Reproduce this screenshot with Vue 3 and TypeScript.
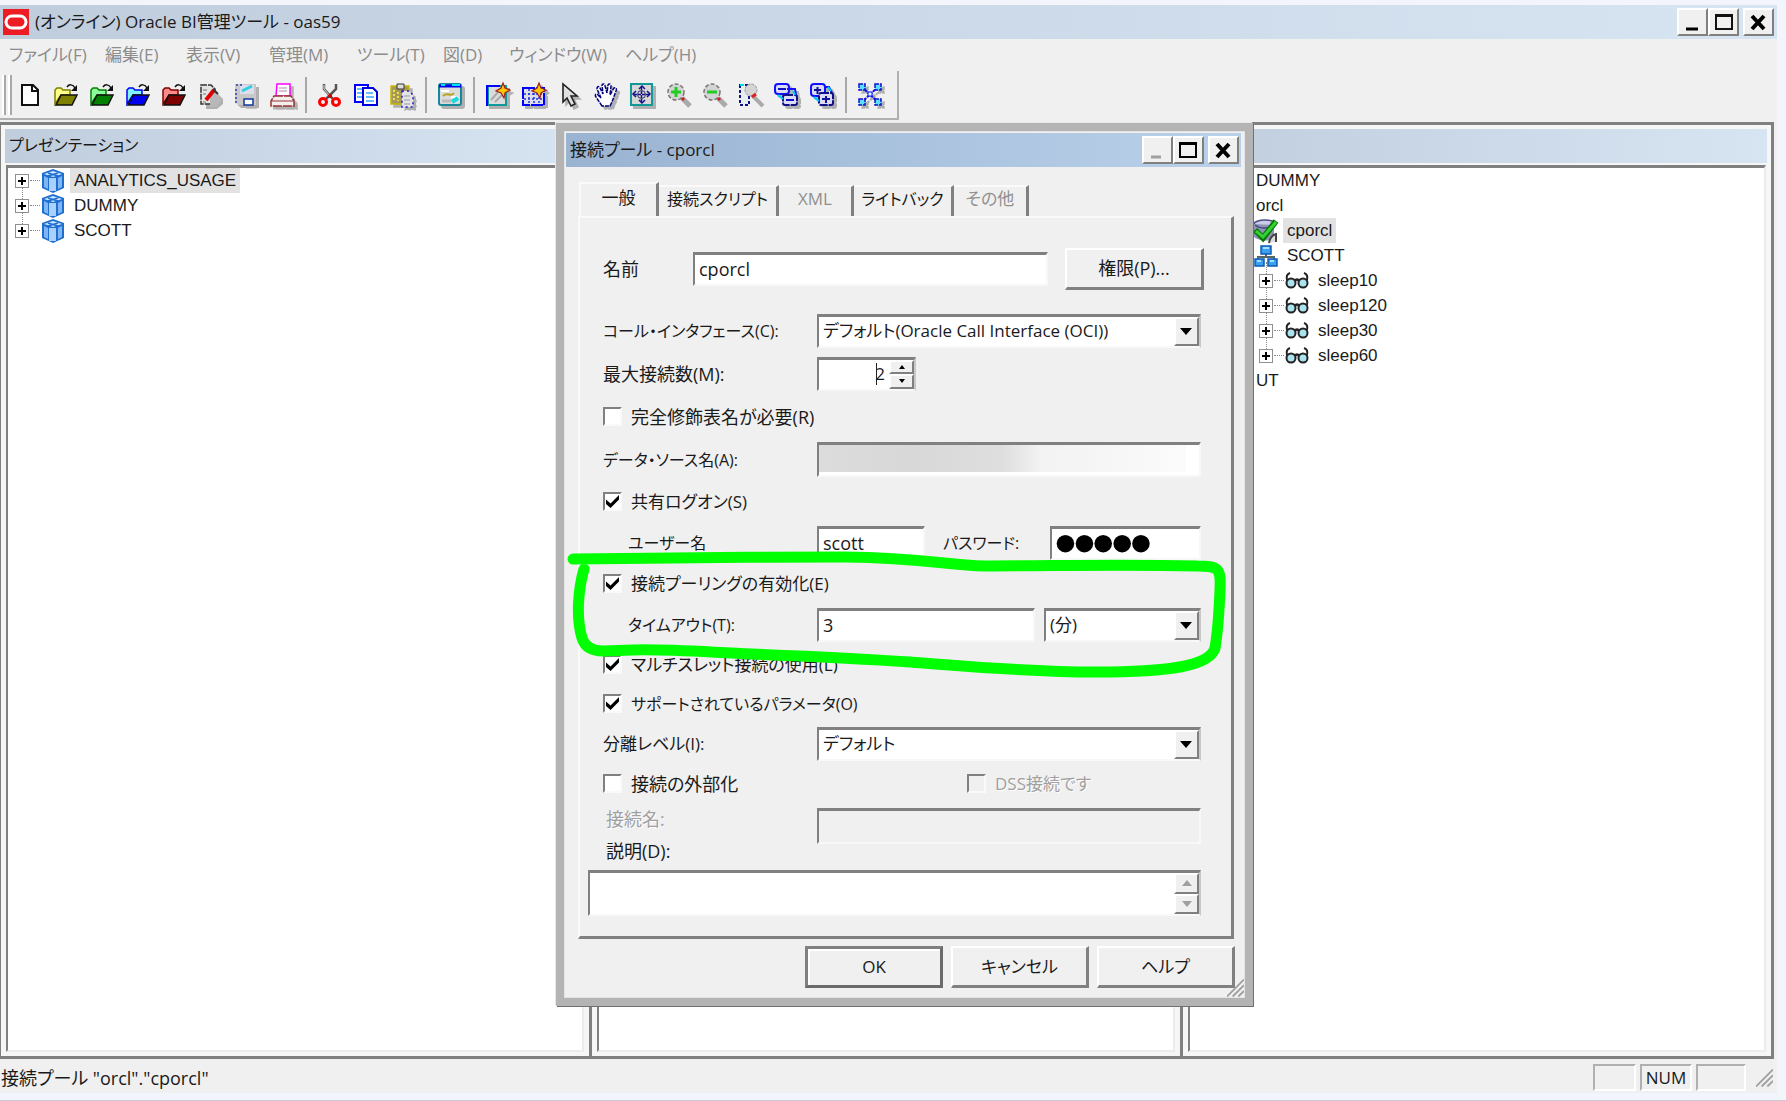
<script setup lang="ts">
import { ref } from 'vue'

interface TreeRow {
  label: string
  depth: number
  icon?: string
  expandable?: boolean
  selected?: boolean
}

const folder = (light: string, dark: string): string =>
  `<path d="M1 21V7l2-2h4l2 2h7v5H7z" fill="${light}" stroke="${dark}" stroke-width="1.5"/>
   <path d="M2 22 7 12h16l-5 10z" fill="${dark}" stroke="#111" stroke-width="1.5"/>
   <path d="M13 4c2-3 6-3 8 1" fill="none" stroke="#111" stroke-width="1.5"/><path d="M23 2v6h-6z" fill="#111"/>`

const lens = (mark: string): string =>
  `<path d="M16 15l8 8" stroke="#aaa" stroke-width="5"/><circle cx="10" cy="9" r="8" fill="#d4d4d4" stroke="#777" stroke-width="1.5" stroke-dasharray="4 2"/>
   <path d="M16 15l2 2" stroke="#c22" stroke-width="3"/><path d="${mark}" stroke="#2c2" stroke-width="3" fill="none"/>`

const icons: Record<string, string> = {
  blank: '<path d="M4 2h11l5 5v15H4z" fill="#fff" stroke="#111" stroke-width="2"/><path d="M14 2v6h6" fill="none" stroke="#111" stroke-width="2"/>',
  openYellow: folder('#ffff8a', '#7f7f00'),
  openGreen: folder('#8aff9a', '#007f00'),
  openBlue: folder('#7ff4ff', '#0000f0'),
  openRed: folder('#ff8a8a', '#7f0000'),
  check: '<path d="M8 8h9l8 8v5l-6 5H8z" fill="#b0b0b0"/><path d="M3 2h10l4 4v15H3z" fill="#e4e4e4" stroke="#333" stroke-width="1.5" stroke-dasharray="6 1"/><path d="M12 14l5-5 7 8-6 7h-6z" fill="#b8b8b8"/><path d="M8 17 16 7" stroke="#e00000" stroke-width="4"/><path d="M15 6l5 5" stroke="#333" stroke-width="2"/><path d="M5 7h4M5 11h3M5 19h3" stroke="#777"/>',
  save: '<path d="M1 1h21v21H4l-3-3z" fill="#c8c8c8"/><path d="M6 2h14v9H6z" fill="#dde"/><path d="M8 8l10-5" stroke="#35cde0" stroke-width="3"/><path d="M2 6v14M2 2h6" stroke="#24a" stroke-width="1.5" stroke-dasharray="2 2"/><path d="M10 16h9v6h-9z" fill="#fff" stroke="#113a9a" stroke-width="1.5"/>',
  print: '<path d="M7 1h13v12H6z" fill="#fff" stroke="#f0f" stroke-width="1.5"/><path d="M9 5h8M9 8h8" stroke="#a8a" /><path d="M4 13h17l3 5v5H1v-5z" fill="#f4eeee" stroke="#933" stroke-width="1.5" stroke-dasharray="9 1"/><path d="M2 18h21" stroke="#933"/>',
  cut: '<path d="M6 1v5l9 10M18 1v5L8 16" fill="none" stroke="#555" stroke-width="2.5"/><path d="M6 2v4l5 6" stroke="#ddd" fill="none"/><circle cx="5" cy="19" r="3.5" fill="#eee" stroke="#f00" stroke-width="3"/><circle cx="18" cy="19" r="3.5" fill="#eee" stroke="#f00" stroke-width="3"/><circle cx="12" cy="13" r="2" fill="#c00"/>',
  copy: '<path d="M1 2h13v17H1z" fill="#fff" stroke="#00f" stroke-width="2"/><path d="M9 5h10l4 4v13H9z" fill="#fff" stroke="#00d" stroke-width="2"/><path d="M3 6h5M3 10h5M3 14h5M12 10h7M12 14h8M12 18h8" stroke="#37a7ff" stroke-width="1.5"/>',
  paste: '<path d="M1 3h18v18H1z" fill="#a59a5c" stroke="#c8b800" stroke-width="1.5"/><path d="M7 1h7v5H7z" fill="#ddd" stroke="#333"/><path d="M4 7v11M8 9v9" stroke="#f0e040" stroke-width="2" stroke-dasharray="2 2"/><path d="M12 8h7l4 4v12H12z" fill="#e4e4e4" stroke="#22c" stroke-width="1.5" stroke-dasharray="2 3"/><path d="M14 13h6M14 17h6M14 21h6" stroke="#99a"/>',
  view: '<rect x="1" y="1" width="22" height="21" rx="2" fill="#dcdcdc" stroke="#17889c" stroke-width="2"/><path d="M1 3h22" stroke="#00e" stroke-width="3"/><path d="M3 2h4M14 2h8" stroke="#0df" stroke-width="2"/><path d="M3 8h8M13 14h7" stroke="#fff" stroke-width="2"/><path d="M5 13c5-5 7 2 11-3" fill="none" stroke="#b2a51a" stroke-width="2"/><path d="M4 18h9" stroke="#bbb" stroke-width="3"/><path d="M14 19l6-4" stroke="#1dd" stroke-width="4"/>',
  newBox: '<path d="M2 22V3h18v19z" fill="#dcdcdc" stroke="#199" stroke-width="2"/><path d="M1 23V3h13" fill="none" stroke="#00f" stroke-width="2"/><path d="M5 17l8-9M9 19l8-8" stroke="#aaa" stroke-width="2"/><path d="M17 0l2 5 5 2-5 3-1 5-3-5-5-2 5-3z" fill="#ffc800" stroke="#922" stroke-width="1.2"/>',
  newTable: '<path d="M1 5h21v17H1z" fill="#dde" stroke="#00f" stroke-width="2" stroke-dasharray="12 1"/><path d="M2 11h20M2 16h20M7 6v15M12 6v15M17 6v15" stroke="#23d" stroke-width="1.5" stroke-dasharray="2 2"/><path d="M17 0l2 5 5 2-5 3-1 5-3-5-5-2 5-3z" fill="#ffc800" stroke="#922" stroke-width="1.2"/>',
  pointer: '<path d="M5 1v18l4-4 4 8 4-2-4-8h6z" fill="#e0e0e0" stroke="#222" stroke-width="1.6"/>',
  hand: '<path d="M8 23 2 14c-2-3 1-4 3-1l2 2L3 6c0-3 2-3 3-1l3 6L8 2c1-2 3-1 3 1l2 7 1-8c1-2 3-1 3 1l-1 9 4-7c2-1 3 1 2 3l-4 11-2 4z" fill="#fff" stroke="#00007a" stroke-width="1.5" stroke-dasharray="4 1"/>',
  fit: '<path d="M1 1h21v21H1z" fill="#d8d8d8" stroke="#199" stroke-width="2"/><path d="M11.500 4v15M4 11.500h15" stroke="#118" stroke-width="1.500" stroke-dasharray="3 1"/><path d="M9 6l3-3 3 3M9 17l3 3 3-3M6 8l-3 3 3 3M17 8l3 3-3 3" stroke="#118" stroke-width="1.5" fill="none"/><circle cx="11.500" cy="11.500" r="4" fill="none" stroke="#336"/>',
  zoomIn: lens('M10 4v10M5 9h10'),
  zoomOut: lens('M5 9h10'),
  marquee: '<path d="M14 12l11 11" stroke="#aaa" stroke-width="4"/><path d="M2 2h9v20H2z" fill="#e6eef0" stroke="#118" stroke-width="2" stroke-dasharray="3 2"/><circle cx="13" cy="7" r="6" fill="#d4d4d4" stroke="#999" stroke-dasharray="3 1"/><path d="M14 14l4-3" stroke="#d22" stroke-width="3"/><path d="M2 2h4" stroke="#0de" stroke-width="2"/>',
  collapse: '<rect x="1" y="1" width="14" height="10" rx="3" fill="#dcdcf4" stroke="#11f" stroke-width="2"/><path d="M13 6h8l1 6" fill="none" stroke="#11f" stroke-width="2"/><rect x="9" y="12" width="14" height="10" rx="2" fill="#dcdcf4" stroke="#118" stroke-width="2" stroke-dasharray="8 1"/><path d="M4 6h8M12 17h8" stroke="#11c" stroke-width="2"/><path d="M4 12l5 4M19 8l2 4" stroke="#0cf" stroke-width="2"/>',
  expand: '<rect x="1" y="1" width="14" height="12" rx="3" fill="#dcdcf4" stroke="#11f" stroke-width="2"/><path d="M15 4h4l3 6" fill="none" stroke="#11f" stroke-width="2"/><rect x="9" y="10" width="14" height="12" rx="2" fill="#dcdcf4" stroke="#118" stroke-width="2" stroke-dasharray="8 1"/><path d="M4 7h7M7.500 4v7M12 16h8M16 13v7" stroke="#119" stroke-width="2"/><path d="M4 14l5 4M18 4l3 4" stroke="#0cf" stroke-width="2"/>',
  network: '<path d="M4 4l16 15M20 4 4 19" stroke="#11e" stroke-width="2" stroke-dasharray="3 1"/><g fill="#5ae0ff" stroke="#11c" stroke-width="1.5" stroke-dasharray="4 1"><rect x="1" y="1" width="6" height="6"/><rect x="17" y="1" width="6" height="6"/><rect x="1" y="16" width="6" height="6"/><rect x="17" y="16" width="6" height="6"/></g><rect x="10" y="9" width="4" height="4" fill="#dff" stroke="#11e"/>',
  cube: '<path d="M12 0 23 4v15l-11 5L1 19V4z" fill="#1f6fd0"/><path d="M12 2 21 5l-9 3-9-3z" fill="#cfe6ff"/><path d="M3 7l4 2v11l-4-2zM21 7l-4 2v11l4-2z" fill="#7fb6f5"/><path d="M8 9h7v13H8z" fill="#a9d0ff"/><path d="M7 4l10 3M17 4 7 7" stroke="#1f6fd0" stroke-width="1.5"/>',
  pool: '<ellipse cx="11" cy="5" rx="11" ry="4" fill="#c9cbe8" stroke="#4b4e80" stroke-width="1.5"/><path d="M0 5v13c4 4 16 5 20 1V6" fill="#8f93b8"/><path d="M1 6c5 4 15 4 20 0" fill="none" stroke="#444873" stroke-width="1.5"/><path d="M15 24c1-6 3-8 7-9v8" fill="#ddd" stroke="#444" stroke-width="2"/><path d="M1 11l8 8L22 2" fill="none" stroke="#087a08" stroke-width="6"/><path d="M2 12l7 6L22 3" fill="none" stroke="#35d035" stroke-width="3"/>',
  schema: '<path d="M12 8v6M4 17v-4h16v4" fill="none" stroke="#566" stroke-width="2"/><g fill="#3ba0f0" stroke="#0d5cb4" stroke-width="1.500"><path d="M7 2h10v8H7zM1 15h9v7H1zM14 15h9v7h-9z"/></g><path d="M9 4h6M3 17h4M16 17h4" stroke="#a8dcff" stroke-width="2"/>',
  glasses: '<path d="M2 11C1 7 2 5 5 4M22 11c1-4 0-6-3-7" fill="none" stroke="#222" stroke-width="2"/><circle cx="6" cy="14" r="4.500" fill="#a9e4ee" stroke="#222" stroke-width="2"/><circle cx="18" cy="14" r="4.500" fill="#a9e4ee" stroke="#222" stroke-width="2"/><path d="M10 12c1-2 3-2 4 0" fill="none" stroke="#222" stroke-width="2.500"/>'
}

const menus = ['ファイル(F)', '編集(E)', '表示(V)', '管理(M)', 'ツール(T)', '図(D)', 'ウィンドウ(W)', 'ヘルプ(H)']

const toolGroups = [
  ['blank', 'openYellow', 'openGreen', 'openBlue', 'openRed', 'check', 'save', 'print'],
  ['cut', 'copy', 'paste'],
  ['view'],
  ['newBox', 'newTable', 'pointer', 'hand', 'fit', 'zoomIn', 'zoomOut', 'marquee', 'collapse', 'expand'],
  ['network']
]
const shadowed = new Set(['save', 'print', 'paste', 'view', 'newBox', 'newTable', 'pointer', 'hand', 'fit', 'collapse', 'expand', 'network'])

const panes: { title: string; kind: string; rows: TreeRow[] }[] = [
  {
    title: 'プレゼンテーション',
    kind: 'presentation',
    rows: [
      { label: 'ANALYTICS_USAGE', depth: 0, icon: 'cube', expandable: true, selected: true },
      { label: 'DUMMY', depth: 0, icon: 'cube', expandable: true },
      { label: 'SCOTT', depth: 0, icon: 'cube', expandable: true }
    ]
  },
  { title: '', kind: 'business', rows: [] },
  {
    title: '',
    kind: 'physical',
    rows: [
      { label: 'DUMMY', depth: 0 },
      { label: 'orcl', depth: 0 },
      { label: 'cporcl', depth: 1, icon: 'pool', selected: true },
      { label: 'SCOTT', depth: 1, icon: 'schema' },
      { label: 'sleep10', depth: 2, icon: 'glasses', expandable: true },
      { label: 'sleep120', depth: 2, icon: 'glasses', expandable: true },
      { label: 'sleep30', depth: 2, icon: 'glasses', expandable: true },
      { label: 'sleep60', depth: 2, icon: 'glasses', expandable: true },
      { label: 'UT', depth: 0 }
    ]
  }
]

const tabs = [
  { label: '一般', disabled: false },
  { label: '接続スクリプト', disabled: false },
  { label: 'XML', disabled: true },
  { label: 'ライトバック', disabled: false },
  { label: 'その他', disabled: true }
]

const name = ref('cporcl')
const maxConnections = ref('2')
const user = ref('scott')
const password = ref('scott')
const timeout = ref('3')
const qualified = ref(false)
const shared = ref(true)
const pooling = ref(true)
const multithread = ref(true)
const parameters = ref(true)
const externalize = ref(false)
</script>

<template>
  <div class="app">
    <header class="titlebar">
      <svg class="logo" viewBox="0 0 26 26"><rect width="26" height="26" fill="#ed1c24" /><rect x="3" y="7" width="20" height="12" rx="6" fill="none" stroke="#fff" stroke-width="3" /></svg>
      <h1>(オンライン) Oracle BI管理ツール - oas59</h1>
      <div class="winbtns">
        <button aria-label="minimize"><svg viewBox="0 0 24 24"><path d="M5 19h12" stroke="#000" stroke-width="3" /></svg></button>
        <button aria-label="maximize"><svg viewBox="0 0 24 24"><path d="M4 5h16v14H4zM4 6h16" fill="none" stroke="#111" stroke-width="2" /></svg></button>
        <button aria-label="close" class="close"><svg viewBox="0 0 24 24"><path d="M5 6l12 13M17 6 5 19" stroke="#000" stroke-width="4" /></svg></button>
      </div>
    </header>

    <nav class="menubar">
      <button v-for="m in menus" :key="m" disabled>{{ m }}</button>
    </nav>

    <div class="toolbar-area">
      <div class="toolbar">
        <i class="grip"></i><i class="grip"></i>
        <div v-for="(group, g) in toolGroups" :key="g" class="group">
          <button v-for="icon in group" :key="icon" :aria-label="icon" :class="{ shadowed: shadowed.has(icon) }">
            <svg viewBox="0 0 24 24" v-html="icons[icon]"></svg>
          </button>
        </div>
      </div>
    </div>

    <main class="panes">
      <section v-for="pane in panes" :key="pane.kind" class="pane" :class="pane.kind">
        <h2>{{ pane.title }}</h2>
        <ul class="tree">
          <li v-for="row in pane.rows" :key="row.label" :class="'depth' + row.depth">
            <template v-if="row.expandable">
              <button class="expander" aria-label="expand"></button><i class="dots"></i>
            </template>
            <svg v-if="row.icon" class="node" viewBox="0 0 24 24" v-html="icons[row.icon]"></svg>
            <span :class="{ selected: row.selected }">{{ row.label }}</span>
          </li>
        </ul>
      </section>
    </main>

    <footer class="statusbar">
      <span class="message">接続プール "orcl"."cporcl"</span>
      <span class="cell"></span><span class="cell num">NUM</span><span class="cell last"></span>
      <svg class="sizer" viewBox="0 0 18 18"><path d="M0 18 18 0M6 18 18 6M12 18l6-6" stroke="#a0a0a0" stroke-width="2" /></svg>
    </footer>

    <div class="dialog" role="dialog" aria-labelledby="dlg-title">
      <div class="dialog-title">
        <h2 id="dlg-title">接続プール - cporcl</h2>
        <div class="winbtns">
          <button aria-label="minimize dialog" disabled><svg viewBox="0 0 24 24"><path d="M5 19h10" stroke="#a0a0a0" stroke-width="3" /></svg></button>
          <button aria-label="maximize dialog"><svg viewBox="0 0 24 24"><path d="M3 5h16v14H3zM3 6h16" fill="none" stroke="#000" stroke-width="2" /></svg></button>
          <button aria-label="close dialog" class="close"><svg viewBox="0 0 24 24"><path d="M5 6l12 13M17 6 5 19" stroke="#000" stroke-width="4" /></svg></button>
        </div>
      </div>

      <div class="tabs" role="tablist">
        <button v-for="(tab, i) in tabs" :key="tab.label" role="tab" :class="{ active: i === 0 }" :disabled="tab.disabled">{{ tab.label }}</button>
      </div>

      <form class="page" @submit.prevent>
        <div class="row first">
          <label for="name" class="short">名前</label>
          <input id="name" v-model="name" class="field grow" type="text" />
          <button class="push perm" type="button">権限(P)...</button>
        </div>
        <div class="row">
          <label for="call" class="kana">コール・インタフェース(C):</label>
          <div class="combo grow"><select id="call"><option>デフォルト(Oracle Call Interface (OCI))</option></select><i></i></div>
        </div>
        <div class="row">
          <label for="max">最大接続数(M):</label>
          <div class="spin">
            <input id="max" v-model="maxConnections" type="text" />
            <div><button type="button" aria-label="up"></button><button type="button" aria-label="down" class="down"></button></div>
          </div>
        </div>
        <div class="row"><label class="check"><input v-model="qualified" type="checkbox" />完全修飾表名が必要(R)</label></div>
        <div class="row">
          <label for="source" class="kana">データ・ソース名(A):</label>
          <div class="masked grow"><input id="source" class="field" type="text" /><i></i></div>
        </div>
        <div class="row mid"><label class="check mixed"><input v-model="shared" type="checkbox" />共有ログオン(S)</label></div>
        <div class="row mid">
          <label for="user" class="sub kana">ユーザー名</label>
          <input id="user" v-model="user" class="field user" type="text" />
          <label for="pwd" class="pwd-label kana">パスワード:</label>
          <input id="pwd" v-model="password" class="field pwd" type="password" />
        </div>
        <div class="row mid"><label class="check mixed"><input v-model="pooling" type="checkbox" />接続プーリングの有効化(E)</label></div>
        <div class="row mid">
          <label for="timeout" class="sub kana">タイムアウト(T):</label>
          <input id="timeout" v-model="timeout" class="field grow" type="text" />
          <div class="combo unit"><select aria-label="タイムアウト単位"><option>(分)</option></select><i></i></div>
        </div>
        <div class="row low"><label class="check mixed"><input v-model="multithread" type="checkbox" />マルチスレット接続の使用(L)</label></div>
        <div class="row low"><label class="check kana"><input v-model="parameters" type="checkbox" />サポートされているパラメータ(O)</label></div>
        <div class="row mid">
          <label for="isolation" class="mixed">分離レベル(I):</label>
          <div class="combo grow"><select id="isolation"><option>デフォルト</option></select><i></i></div>
        </div>
        <div class="row low">
          <label class="check grow"><input v-model="externalize" type="checkbox" />接続の外部化</label>
          <label class="check mixed dss"><input type="checkbox" disabled />DSS接続です</label>
        </div>
        <div class="naming">
          <label for="conn" class="off">接続名:</label>
          <input id="conn" class="field" type="text" disabled />
          <label for="desc">説明(D):</label>
        </div>
        <div class="desc">
          <textarea id="desc"></textarea>
          <div class="scroll"><button type="button" disabled aria-label="scroll up"></button><button type="button" disabled aria-label="scroll down" class="down"></button></div>
        </div>
      </form>

      <div class="actions">
        <button class="push default">OK</button>
        <button class="push">キャンセル</button>
        <button class="push">ヘルプ</button>
      </div>
      <svg class="sizer" viewBox="0 0 18 18"><path d="M0 18 18 0M6 18 18 6M12 18l6-6" stroke="#a0a0a0" stroke-width="2" /></svg>

      <svg class="marker" viewBox="0 0 670 140">
        <path d="M18 19C80 18 200 17 290 17C370 18 390 25 430 26C500 26 560 24 642 26C664 26 666 28 665 50C664 75 663 90 660 108C655 126 615 132 541 132C470 132 410 126 355 122C300 118 250 116 197 114C150 112 110 109 78 110L48 111C38 111 30 108 27 98C21 78 23 50 29 29" />
      </svg>
    </div>
  </div>
</template>

<style>
body {
  margin: 0;
  background: #f2f5fb;
}
</style>

<style scoped>
.app {
  position: relative;
  box-sizing: border-box;
  height: 100vh;
  min-height: 1040px;
  padding: 5px 9px 7px 0;
  border-bottom: 1px solid #c8c8ce;
  background: #f2f5fb;
  display: flex;
  flex-direction: column;
  font: 18px/24px "Open Sans", "Noto Sans CJK JP", sans-serif;
  font-feature-settings: "palt";
  color: #1a1a1a;
  overflow: hidden;
}
button, input, select, textarea {
  box-sizing: border-box;
  margin: 0;
  padding: 0;
  font: inherit;
  font-feature-settings: inherit;
  color: inherit;
  border: 0;
  border-radius: 0;
  outline: 0;
}
h1, h2 { margin: 0; font: inherit; }
.kana { font-size: 16px; }
.mixed { font-size: 17px; }
.grow { flex: 1; min-width: 0; }

.titlebar {
  display: flex;
  align-items: center;
  gap: 6px;
  height: 34px;
  padding: 0 3px;
  background: linear-gradient(90deg, #c0cddd, #d7e4f2);
}
.titlebar h1 { flex: 1; font-size: 17px; }
.logo { width: 26px; height: 26px; }
.winbtns { display: flex; }
.winbtns button {
  width: 31px;
  height: 28px;
  background: #f0f0f0;
  border: 2px solid;
  border-color: #fff #808080 #808080 #fff;
  display: grid;
  place-items: center;
}
.winbtns .close { margin-left: 4px; }
.winbtns svg { width: 24px; height: 24px; }

.menubar {
  display: grid;
  grid-template-columns: 96px 81px 83px 88px 86px 66px 116px 90px;
  height: 32px;
  padding-left: 9px;
  background: #f0f0f0;
}
.menubar button {
  background: none;
  color: #8c8c8c;
  text-align: left;
  font-size: 17px;
  white-space: nowrap;
}

.toolbar-area {
  display: flex;
  padding-bottom: 2px;
  background: #f0f0f0;
}
.toolbar {
  display: flex;
  align-items: center;
  box-sizing: border-box;
  height: 49px;
  padding-right: 9px;
  border-right: 2px solid #b0b0b0;
  border-bottom: 2px solid #b0b0b0;
}
.grip {
  width: 2px;
  height: 40px;
  margin-left: 2px;
  border-right: 2px solid #a8a8a8;
  background: #fff;
}
.group { display: flex; align-items: center; }
.group + .group::before {
  content: "";
  width: 2px;
  height: 36px;
  margin: 0 5px;
  background: #a8a8a8;
}
.group button {
  width: 36px;
  height: 36px;
  background: none;
  display: grid;
  place-items: center;
}
.group svg { width: 24px; height: 24px; overflow: visible; }
.group .shadowed svg { filter: drop-shadow(3px 3px 0 #b0b0b0); }

.panes {
  flex: 1;
  display: flex;
  padding-right: 3px;
  background: #f0f0f0;
}
.pane {
  flex: 1;
  display: flex;
  flex-direction: column;
  box-sizing: border-box;
  padding: 4px;
  background: #f6f6f6;
  border: solid #808080;
  border-width: 3px 2px 3px 1px;
}
.pane.physical { border-right-width: 3px; }
.pane h2 {
  height: 34px;
  padding-left: 4px;
  line-height: 32px;
  font-size: 16px;
  background: linear-gradient(90deg, #c0cddd, #d7e4f2);
}
.tree {
  flex: 1;
  margin: 2px 1px 0;
  padding: 0;
  list-style: none;
  background: #fff;
  border: solid;
  border-width: 3px 2px 2px;
  border-color: #808080 #ececec #ececec #808080;
  font: 17px/25px "Liberation Sans", sans-serif;
}
.tree li { display: flex; align-items: center; height: 25px; position: relative; }
.presentation .depth0 { padding-left: 7px; }
.physical .depth0 { padding-left: 62px; }
.physical .depth1 { padding-left: 64px; }
.physical .depth2 { padding-left: 69px; }
.tree span { padding: 0 4px; }
.tree .selected { background: #e2e2e2; }
.node { width: 24px; height: 24px; margin-right: 5px; overflow: visible; }
.expander {
  width: 14px;
  height: 14px;
  border: 1px solid #909090;
  background:
    linear-gradient(#000, #000) center / 8px 2px no-repeat,
    linear-gradient(#000, #000) center / 2px 8px no-repeat,
    #fff;
}
.dots { width: 10px; margin: 0 1px; border-top: 1px dotted #888; }
.depth2 .expander::before,
.presentation li + li .expander::before {
  content: "";
  position: absolute;
  top: -6px;
  height: 12px;
  border-left: 1px dotted #888;
}

.statusbar {
  display: flex;
  align-items: center;
  height: 34px;
  padding: 3px 4px 0 1px;
  box-sizing: border-box;
  background: #f0f0f0;
  font-size: 17px;
}
.message { flex: 1; font-size: 18px; }
.cell {
  box-sizing: border-box;
  width: 43px;
  height: 27px;
  margin-right: 4px;
  border: 2px solid;
  border-color: #b0b0b0 #fff #fff #b0b0b0;
  text-align: center;
  line-height: 24px;
}
.num { width: 52px; }
.last { width: 50px; margin-right: 10px; }
.sizer { width: 17px; height: 18px; }

.dialog {
  position: absolute;
  left: 556px;
  top: 123px;
  box-sizing: border-box;
  width: 697px;
  padding: 2px;
  background: #f0f0f0;
  border: 8px solid #b4b4b4;
  box-shadow: inset 0 0 0 1px #e4e4e4, 1px 1px 0 #707070, -1px -1px 0 #e8e8e8;
}
.dialog-title {
  display: flex;
  align-items: center;
  height: 34px;
  margin-right: 2px;
  padding: 0 2px 0 4px;
  background: linear-gradient(90deg, #9ab3d1, #b9d1ea);
}
.dialog-title h2 { flex: 1; font-size: 17px; }
.tabs {
  display: flex;
  align-items: flex-end;
  height: 34px;
  padding: 15px 0 0 13px;
}
.tabs button {
  height: 31px;
  padding-bottom: 9px;
  background: #f0f0f0;
  border: solid;
  border-width: 2px 3px 0 0;
  border-color: #fafafa #808080 #fafafa #fafafa;
  font-size: 17px;
  white-space: nowrap;
}
.tabs button:nth-child(1) { width: 80px; }
.tabs button:nth-child(2) { width: 120px; font-size: 16px; }
.tabs button:nth-child(3) { width: 75px; }
.tabs button:nth-child(4) { width: 100px; font-size: 16px; }
.tabs button:nth-child(5) { width: 75px; }
.tabs .active { height: 34px; padding-bottom: 4px; border-left-width: 2px; }
.tabs button:disabled { color: #909090; }

.page {
  margin: 0 9px 0 12px;
  padding: 29px 30px 20px 23px;
  border: 2px solid;
  border-color: #fafafa #808080 #808080 #fafafa;
  border-right-width: 3px;
  border-bottom-width: 3px;
}
.row { display: flex; align-items: center; height: 43px; }
.row.mid { height: 41px; }
.row.low { height: 39px; }
.first { margin-bottom: 19px; }
.row > label:not(.check) { width: 214px; white-space: nowrap; }
.row > label.short { width: 90px; }
.row > label.sub { width: 189px; padding-left: 25px; }
.row > label.pwd-label { width: 107px; padding-left: 18px; }
.field {
  height: 34px;
  padding: 0 4px;
  background: #fff;
  border: solid;
  border-width: 3px 2px 2px;
  border-color: #808080 #f8f8f8 #f8f8f8 #808080;
}
.user { width: 108px; }
.pwd {
  flex: 1;
  min-width: 0;
  font: 54px/28px "Liberation Sans", sans-serif;
  color: #000;
  -webkit-text-stroke: 3px #000;
}
.push {
  height: 42px;
  background: #f0f0f0;
  border: solid;
  border-width: 2px 3px 3px 2px;
  border-color: #fff #808080 #808080 #fff;
  font-size: 17px;
}
.perm { width: 139px; margin: 0 -3px 0 17px; font-size: 18px; }

.combo, .spin {
  display: flex;
  position: relative;
  box-sizing: border-box;
  height: 34px;
  background: #fff;
  border: solid;
  border-width: 3px 2px 2px;
  border-color: #808080 #c8c8c8 #f8f8f8 #808080;
}
.combo select {
  flex: 1;
  min-width: 0;
  appearance: none;
  padding-left: 4px;
  background: #fff;
  font-size: 17px;
}
.combo i {
  position: absolute;
  right: 0;
  top: 0;
  bottom: 0;
  width: 25px;
  box-sizing: border-box;
  background: #f0f0f0;
  border: 2px solid;
  border-color: #fff #808080 #808080 #fff;
  pointer-events: none;
}
.combo i::before {
  content: "";
  position: absolute;
  left: 4px;
  top: 9px;
  border: 6px solid transparent;
  border-top: 7px solid #000;
  border-bottom: 0;
}
.unit { width: 157px; margin-left: 9px; }
.spin { width: 99px; }
.spin::before {
  content: "";
  position: absolute;
  left: 57px;
  top: 3px;
  width: 1px;
  height: 22px;
  background: #222;
}
.spin input { flex: 1; min-width: 0; padding-right: 4px; background: none; text-align: right; font-size: 17px; }
.spin > div, .scroll { display: flex; flex-direction: column; width: 25px; }
.spin button, .scroll button {
  flex: 1;
  background: #f0f0f0;
  border: 2px solid;
  border-color: #fff #808080 #808080 #fff;
  display: grid;
  place-items: center;
}
.spin button::before, .scroll button::before {
  content: "";
  border: 3px solid transparent;
  border-bottom: 4px solid #000;
  border-top: 0;
}
.spin .down::before, .scroll .down::before { transform: rotate(180deg); }
.scroll button::before { border-width: 0 5px 6px; border-bottom-color: #a0a0a0; }

.masked { display: flex; position: relative; }
.masked .field { width: 100%; height: 35px; }
.masked i {
  position: absolute;
  inset: 3px 15px 5px 2px;
  background: linear-gradient(90deg, #dcdcdc, #d8d8d8 25%, #dedede 50%, #f2f2f2 60%, #fbfbfb);
}

.check { display: flex; align-items: center; gap: 9px; white-space: nowrap; }
.check input {
  appearance: none;
  width: 19px;
  height: 19px;
  background: #fff;
  border: 2px solid;
  border-color: #808080 #fafafa #fafafa #808080;
}
.check input:checked::before {
  content: "";
  display: block;
  width: 13px;
  height: 13px;
  margin: 1px;
  background: #000;
  clip-path: polygon(0 35%, 35% 65%, 100% 0, 100% 35%, 35% 100%, 0 70%);
}
.check input:disabled { background: #f0f0f0; }
.dss { width: 234px; color: #a0a0a0; text-shadow: 1px 1px 0 #fff; }
.off { color: #a0a0a0; text-shadow: 1px 1px 0 #fff; }
.naming {
  display: grid;
  grid-template-columns: 211px 1fr;
  grid-template-rows: 32px 32px;
  align-items: center;
  padding-left: 3px;
}
.naming .field { grid-row: span 2; align-self: start; height: 36px; margin-top: 5px; background: #f0f0f0; }
.desc {
  display: flex;
  box-sizing: border-box;
  height: 46px;
  margin: 3px 0 0 -15px;
  background: #fff;
  border: solid;
  border-width: 3px 2px 2px;
  border-color: #808080 #c8c8c8 #f8f8f8 #808080;
}
.desc textarea { flex: 1; resize: none; background: none; overflow: hidden; }

.actions { display: flex; justify-content: flex-end; gap: 8px; padding: 7px 8px 8px; }
.actions .push { width: 138px; }
.actions .default { border: 3px solid; border-color: #808080 #6a6a6a #6a6a6a #808080; box-shadow: inset 2px 2px 0 #fff; }
.dialog > .sizer { position: absolute; right: 1px; bottom: 1px; }

.marker {
  position: absolute;
  left: -9px;
  top: 409px;
  width: 670px;
  height: 140px;
  overflow: visible;
  pointer-events: none;
}
.marker path {
  fill: none;
  stroke: #0f0;
  stroke-width: 11px;
  stroke-linecap: round;
  stroke-linejoin: round;
}
</style>
